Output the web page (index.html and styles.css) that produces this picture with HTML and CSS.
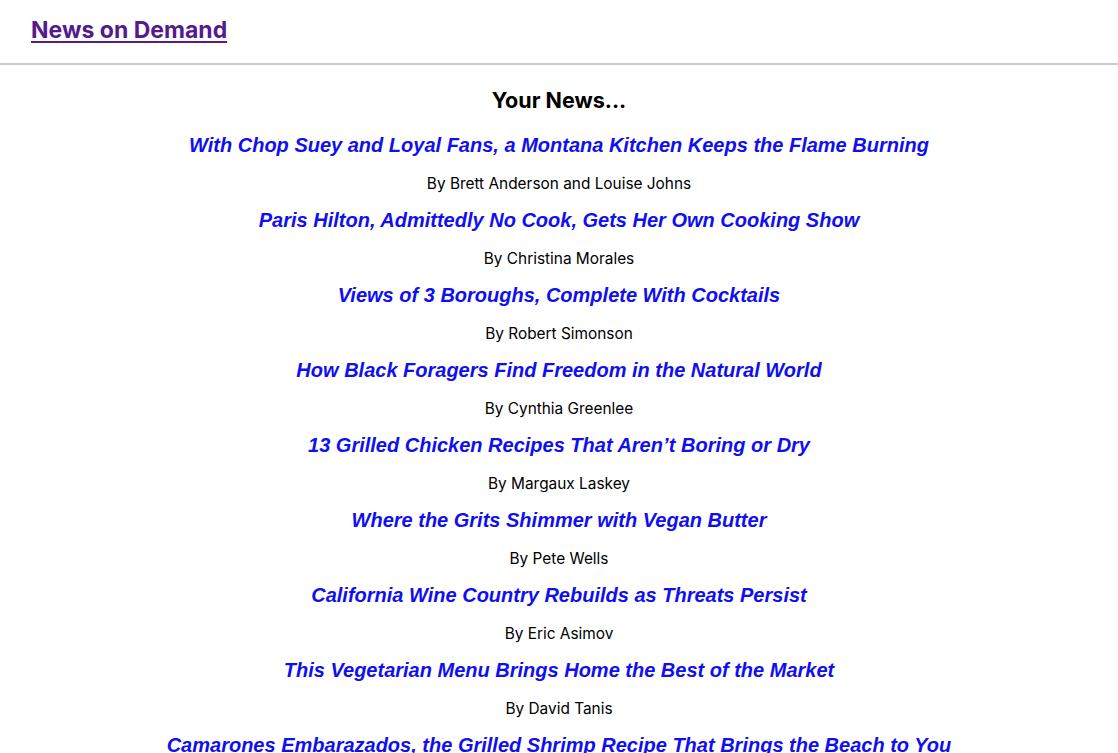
FILE: index.html
```html
<!DOCTYPE html>
<html lang="en">
<head>
<meta charset="utf-8">
<title>News on Demand</title>
<link rel="stylesheet" href="styles.css">
</head>
<body>
<header class="site-header">
  <a class="brand" href="#">News on Demand</a>
</header>
<main class="news">
  <h2 class="news-heading">Your News...</h2>
  <ul class="news-list">
    <li class="news-item"><a class="news-title" href="#">With Chop Suey and Loyal Fans, a Montana Kitchen Keeps the Flame Burning</a><p class="byline">By Brett Anderson and Louise Johns</p></li>
    <li class="news-item"><a class="news-title" href="#">Paris Hilton, Admittedly No Cook, Gets Her Own Cooking Show</a><p class="byline">By Christina Morales</p></li>
    <li class="news-item"><a class="news-title" href="#">Views of 3 Boroughs, Complete With Cocktails</a><p class="byline">By Robert Simonson</p></li>
    <li class="news-item"><a class="news-title" href="#">How Black Foragers Find Freedom in the Natural World</a><p class="byline">By Cynthia Greenlee</p></li>
    <li class="news-item"><a class="news-title" href="#">13 Grilled Chicken Recipes That Aren’t Boring or Dry</a><p class="byline">By Margaux Laskey</p></li>
    <li class="news-item"><a class="news-title" href="#">Where the Grits Shimmer with Vegan Butter</a><p class="byline">By Pete Wells</p></li>
    <li class="news-item"><a class="news-title" href="#">California Wine Country Rebuilds as Threats Persist</a><p class="byline">By Eric Asimov</p></li>
    <li class="news-item"><a class="news-title" href="#">This Vegetarian Menu Brings Home the Best of the Market</a><p class="byline">By David Tanis</p></li>
    <li class="news-item"><a class="news-title" href="#">Camarones Embarazados, the Grilled Shrimp Recipe That Brings the Beach to You</a><p class="byline">By Rick Martinez</p></li>
  </ul>
</main>
</body>
</html>
```
FILE: styles.css
```css
html, body {
  margin: 0;
  padding: 0;
  background: #ffffff;
}
body {
  font-family: Inter, "Noto Sans", sans-serif;
  color: #000000;
}
.site-header {
  height: 63px;
  border-bottom: 2px solid #cccccc;
  display: flex;
  align-items: center;
  padding: 0 31px;
}
.brand {
  color: #551a8b;
  font-size: 23px;
  font-weight: 700;
  text-decoration: underline;
  text-underline-offset: 3px;
  text-decoration-thickness: 2px;
  line-height: 28px;
  margin-top: -4px;
}
.news {
  padding-top: 22px;
  text-align: center;
}
.news-heading {
  margin: 0 0 19px;
  font-size: 21.5px;
  font-weight: 700;
  line-height: 27px;
}
.news-list {
  list-style: none;
  margin: 0;
  padding: 0;
}
.news-item {
  margin: 0;
}
.news-title {
  display: block;
  font-family: "Liberation Sans", Arial, sans-serif;
  font-style: italic;
  font-weight: 700;
  font-size: 20px;
  line-height: 24px;
  color: #0f0fef;
  text-decoration: none;
}
.byline {
  margin: 17px 0 15px;
  font-size: 15.4px;
  line-height: 19px;
}
```
